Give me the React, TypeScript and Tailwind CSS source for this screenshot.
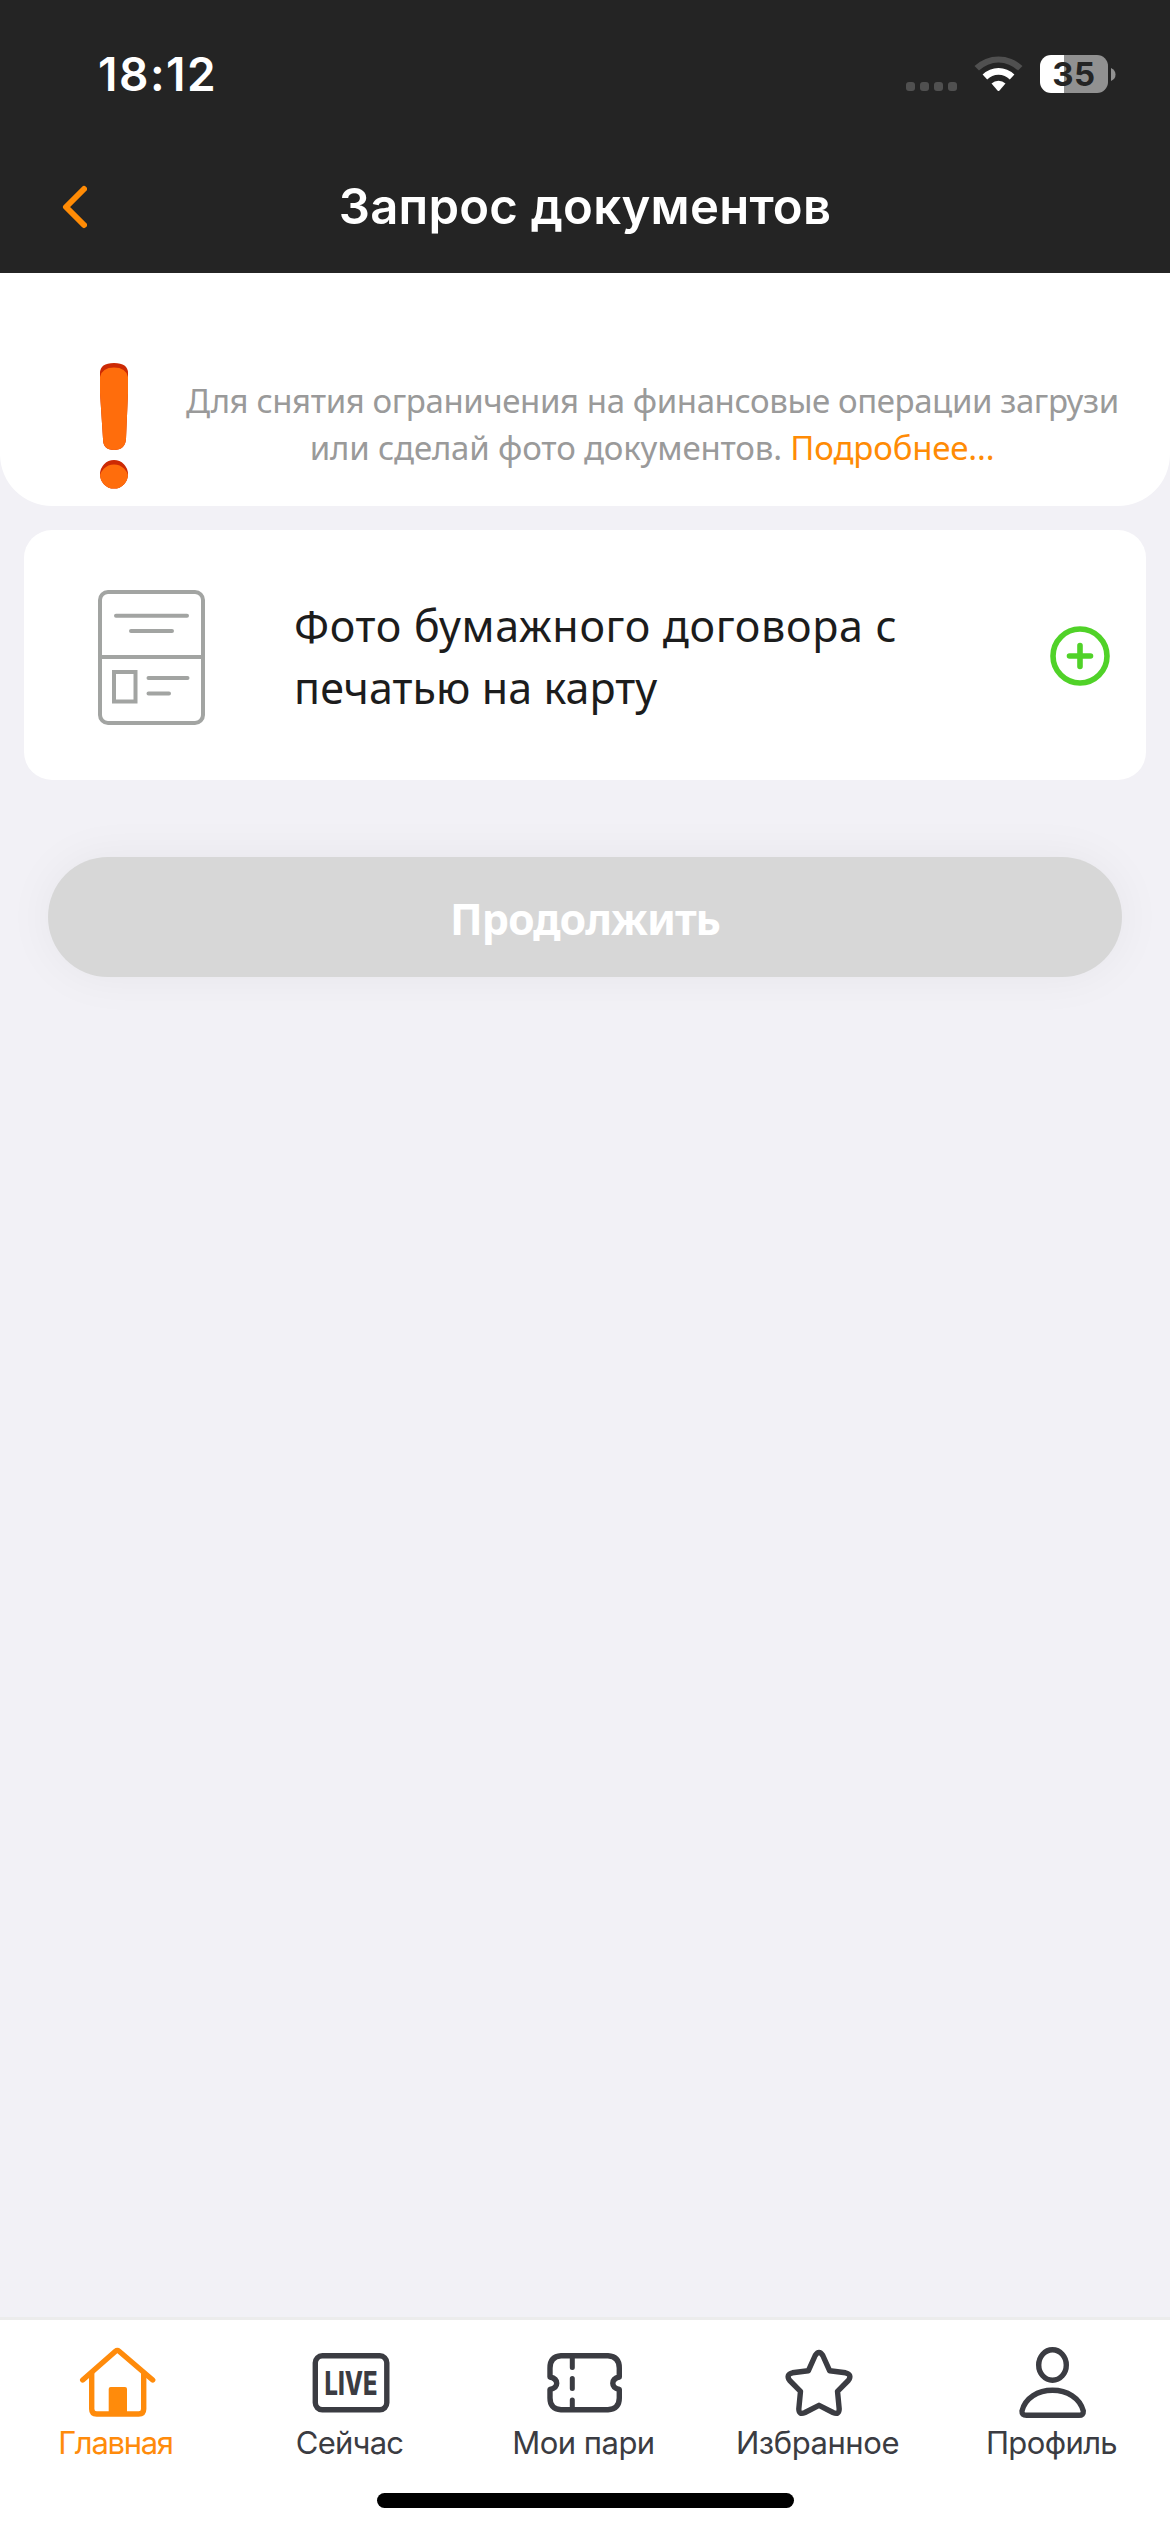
import { ReactNode } from 'react'

interface TabProps {
  label: string
  tracking: string
  active?: boolean
  children: ReactNode
}

function StatusBar() {
  return (
    <div className="flex h-[141px] items-center justify-between pt-[7px] pr-[54px] pl-[98px]">
      <span className="text-[46px] leading-[56px] font-semibold tracking-[1.5px] text-white">18:12</span>
      <div className="flex items-center">
        <div className="mt-[25px] mr-[17px] flex gap-[5px]">
          <i className="h-[9px] w-[9px] rounded-[3px] bg-[#505050]" />
          <i className="h-[9px] w-[9px] rounded-[3px] bg-[#505050]" />
          <i className="h-[9px] w-[9px] rounded-[3px] bg-[#505050]" />
          <i className="h-[9px] w-[9px] rounded-[3px] bg-[#505050]" />
        </div>
        <svg className="mr-[17px] h-[38px] w-[49px]" viewBox="0 0 49 38">
          <path d="M0.5 11 A35 35 0 0 1 48.5 11 L44 15.5 A28 28 0 0 0 5 15.5 Z" fill="#505050" />
          <path d="M8.6 19.5 A23 23 0 0 1 40.4 19.5 L35.8 24.5 A16 16 0 0 0 13.2 24.5 Z" fill="#fff" />
          <path d="M17.5 28.5 A10.5 10.5 0 0 1 31.5 28.5 L25.5 35.6 Q24.5 36.6 23.5 35.6 Z" fill="#fff" />
        </svg>
        <div className="flex h-[38px] w-[68px] items-center justify-center rounded-[11px] bg-[linear-gradient(to_right,#fff_24px,#919191_24px)]">
          <span className="text-[33px] leading-[38px] font-bold tracking-[0.5px] text-[#242424]">35</span>
        </div>
        <svg className="ml-[3px] h-[13px] w-[5px]" viewBox="0 0 5 13">
          <path d="M0 0 Q4.5 2 4.5 6.5 T0 13 Z" fill="#919191" />
        </svg>
      </div>
    </div>
  )
}

function Header() {
  return (
    <header className="h-[273px] bg-[#242424]">
      <StatusBar />
      <div className="grid h-[132px] grid-cols-[120px_1fr_120px] items-center">
        <button type="button" className="pl-[61px]">
          <svg className="h-[44px] w-[26px]" viewBox="0 0 26 44" fill="none">
            <path d="M23 4 L5 22 L23 40" stroke="#ff8b05" strokeWidth="6" strokeLinecap="round" strokeLinejoin="round" />
          </svg>
        </button>
        <h1 className="text-center text-[49px] leading-[60px] font-semibold tracking-[0.25px] text-white">
          Запрос документов
        </h1>
      </div>
    </header>
  )
}

function Notice() {
  return (
    <section className="flex h-[233px] rounded-b-[52px] bg-white pt-[90px] pl-[100px]">
      <svg className="h-[126px] w-[28px] shrink-0" viewBox="0 0 28 126">
        <defs>
          <clipPath id="mark">
            <path d="M0 10 Q0 0 14 0 T28 10 V30 L26 76 Q25 87 14 87 T3 76 L0 30 Z" />
            <ellipse cx="14" cy="111.3" rx="14" ry="14.3" />
          </clipPath>
        </defs>
        <g clipPath="url(#mark)">
          <rect width="28" height="126" fill="#cc2a04" />
          <path d="M0 14 Q2 4.5 14 4.5 T28 14 V88 H0 Z" fill="#ff6d0c" />
          <ellipse cx="14" cy="116" rx="14.5" ry="14.5" fill="#ff6d0c" />
        </g>
      </svg>
      <p className="mt-[14px] ml-[58px] w-[932px] text-center font-['Noto_Sans',sans-serif] text-[33px] leading-[47px] whitespace-nowrap text-[#9a9a9a]">
        <span className="block tracking-[-0.41px]">Для снятия ограничения на финансовые операции загрузи</span>
        <span className="block tracking-[-0.17px]">
          или сделай фото документов. <a className="text-[#ff8b05]">Подробнее...</a>
        </span>
      </p>
    </section>
  )
}

function DocumentCard() {
  return (
    <section className="mx-6 mt-6 flex h-[250px] items-center rounded-[28px] bg-white pr-[36px] pl-[74px]">
      <svg className="mt-[5px] h-[135px] w-[107px] shrink-0" viewBox="0 0 107 135" fill="none" stroke="#a2a4a2" strokeWidth="4">
        <rect x="2" y="2" width="103" height="131" rx="8" />
        <path d="M2 67 H105" />
        <path d="M18 25.7 H89 M33 41 H74 M50.5 88 H89.5 M50.5 103.5 H71" strokeLinecap="round" />
        <rect x="16" y="82" width="21.5" height="29.5" />
      </svg>
      <p className="mt-[4px] ml-[89px] font-['Noto_Sans',sans-serif] text-[43px] leading-[62px] whitespace-nowrap text-[#1c1c1c]">
        <span className="block tracking-[0.68px]">Фото бумажного договора с</span>
        <span className="block tracking-[0.08px]">печатью на карту</span>
      </p>
      <button type="button" className="ml-auto">
        <svg className="mt-[2px] h-[60px] w-[60px]" viewBox="0 0 60 60" fill="none" stroke="#50d228" strokeWidth="5.6">
          <circle cx="30" cy="30" r="27" />
          <path d="M19.5 30 H40.5 M30 19.5 V40.5" strokeLinecap="round" />
        </svg>
      </button>
    </section>
  )
}

function Tab({ label, tracking, active, children }: TabProps) {
  return (
    <button
      type="button"
      className={`flex flex-col items-center ${active ? 'text-[#ff8b0b]' : 'text-[#3b3c42]'}`}
    >
      <svg className="h-[84px] w-[90px]" viewBox="0 0 90 84" fill="none" stroke="currentColor" strokeWidth="5.4" strokeLinejoin="round">
        {children}
      </svg>
      <span className={`mr-[3px] text-[31px] leading-[38px] whitespace-nowrap ${tracking}`}>{label}</span>
    </button>
  )
}

function TabBar() {
  return (
    <nav className="h-[215px] border-t-[3px] border-[#ececec] bg-white">
      <div className="grid grid-cols-5 pt-[20px]">
        <Tab label="Главная" tracking="tracking-[-1.3px]" active>
          <path d="M10.7 40 L43.5 11.3 Q45.3 9.8 47.1 11.3 L80.7 40" strokeLinecap="round" />
          <path d="M19.7 33 V69 Q19.7 74 24.7 74 H66.7 Q71.7 74 71.7 69 V33" />
          <rect x="36.7" y="47" width="18.3" height="27" rx="2" fill="currentColor" stroke="none" />
        </Tab>
        <Tab label="Сейчас" tracking="tracking-[-0.78px]">
          <rect x="9.3" y="15.8" width="71.5" height="54" rx="7" />
          <text
            x="18.5"
            y="54.8"
            textLength="53"
            lengthAdjust="spacingAndGlyphs"
            className="text-[32px] font-extrabold"
            fill="currentColor"
            stroke="none"
          >
            LIVE
          </text>
        </Tab>
        <Tab label="Мои пари" tracking="tracking-[-0.54px]">
          <path d="M21 15.8 H68 Q79.3 16.5 79.3 28 V37 C75 38 72.8 40 72.8 43.3 S75 48.5 79.3 49.5 V58 Q79.3 69 68 69.8 H21 Q10 69 10 58 V49.5 C14.5 48.5 16.7 46.5 16.7 43.3 S14.5 38 10 37 V28 Q10 16.5 21 15.8 Z" />
          <path d="M32.3 18 V27.5 M32.3 38.5 V48.5 M32.3 60 V68" strokeWidth="5" strokeLinecap="round" />
        </Tab>
        <Tab label="Избранное" tracking="tracking-[-0.44px]">
          <path d="M41.2 15.5 Q45 9.5 48.8 15.5 L55.7 30.8 L71.5 32.8 Q78.5 34.5 74.3 40.5 L63.5 51.3 L65.2 69 Q65 75.3 59 72.5 L45 65.3 L31 72.5 Q25 75.3 24.8 69 L26.5 51.3 L15.7 40.5 Q11.5 34.5 18.5 32.8 L34.3 30.8 Z" />
        </Tab>
        <Tab label="Профиль" tracking="tracking-[-0.62px]">
          <ellipse cx="44.5" cy="25" rx="13.8" ry="15.2" />
          <path d="M14 71 C17 58 30 50.2 44.5 50.2 S72 58 75.3 71 Q75.6 75.3 71 75.3 H18.5 Q13.7 75.3 14 71 Z" />
        </Tab>
      </div>
      <div className="mx-auto mt-[31px] h-[15px] w-[417px] rounded-full bg-black" />
    </nav>
  )
}

export default function App() {
  return (
    <div className="flex h-[2532px] w-[1170px] flex-col bg-[#f2f1f6] font-['Inter',sans-serif]">
      <Header />
      <main className="flex-1">
        <Notice />
        <DocumentCard />
        <button
          type="button"
          className="mx-12 mt-[77px] flex h-[120px] w-[1074px] items-center justify-center rounded-full bg-[#d7d7d7] pt-[3px] font-['Noto_Sans',sans-serif] text-[43px] leading-[60px] font-bold tracking-[-1.08px] text-white shadow-[0_0_48px_rgba(0,0,0,0.05)]"
        >
          Продолжить
        </button>
      </main>
      <TabBar />
    </div>
  )
}
